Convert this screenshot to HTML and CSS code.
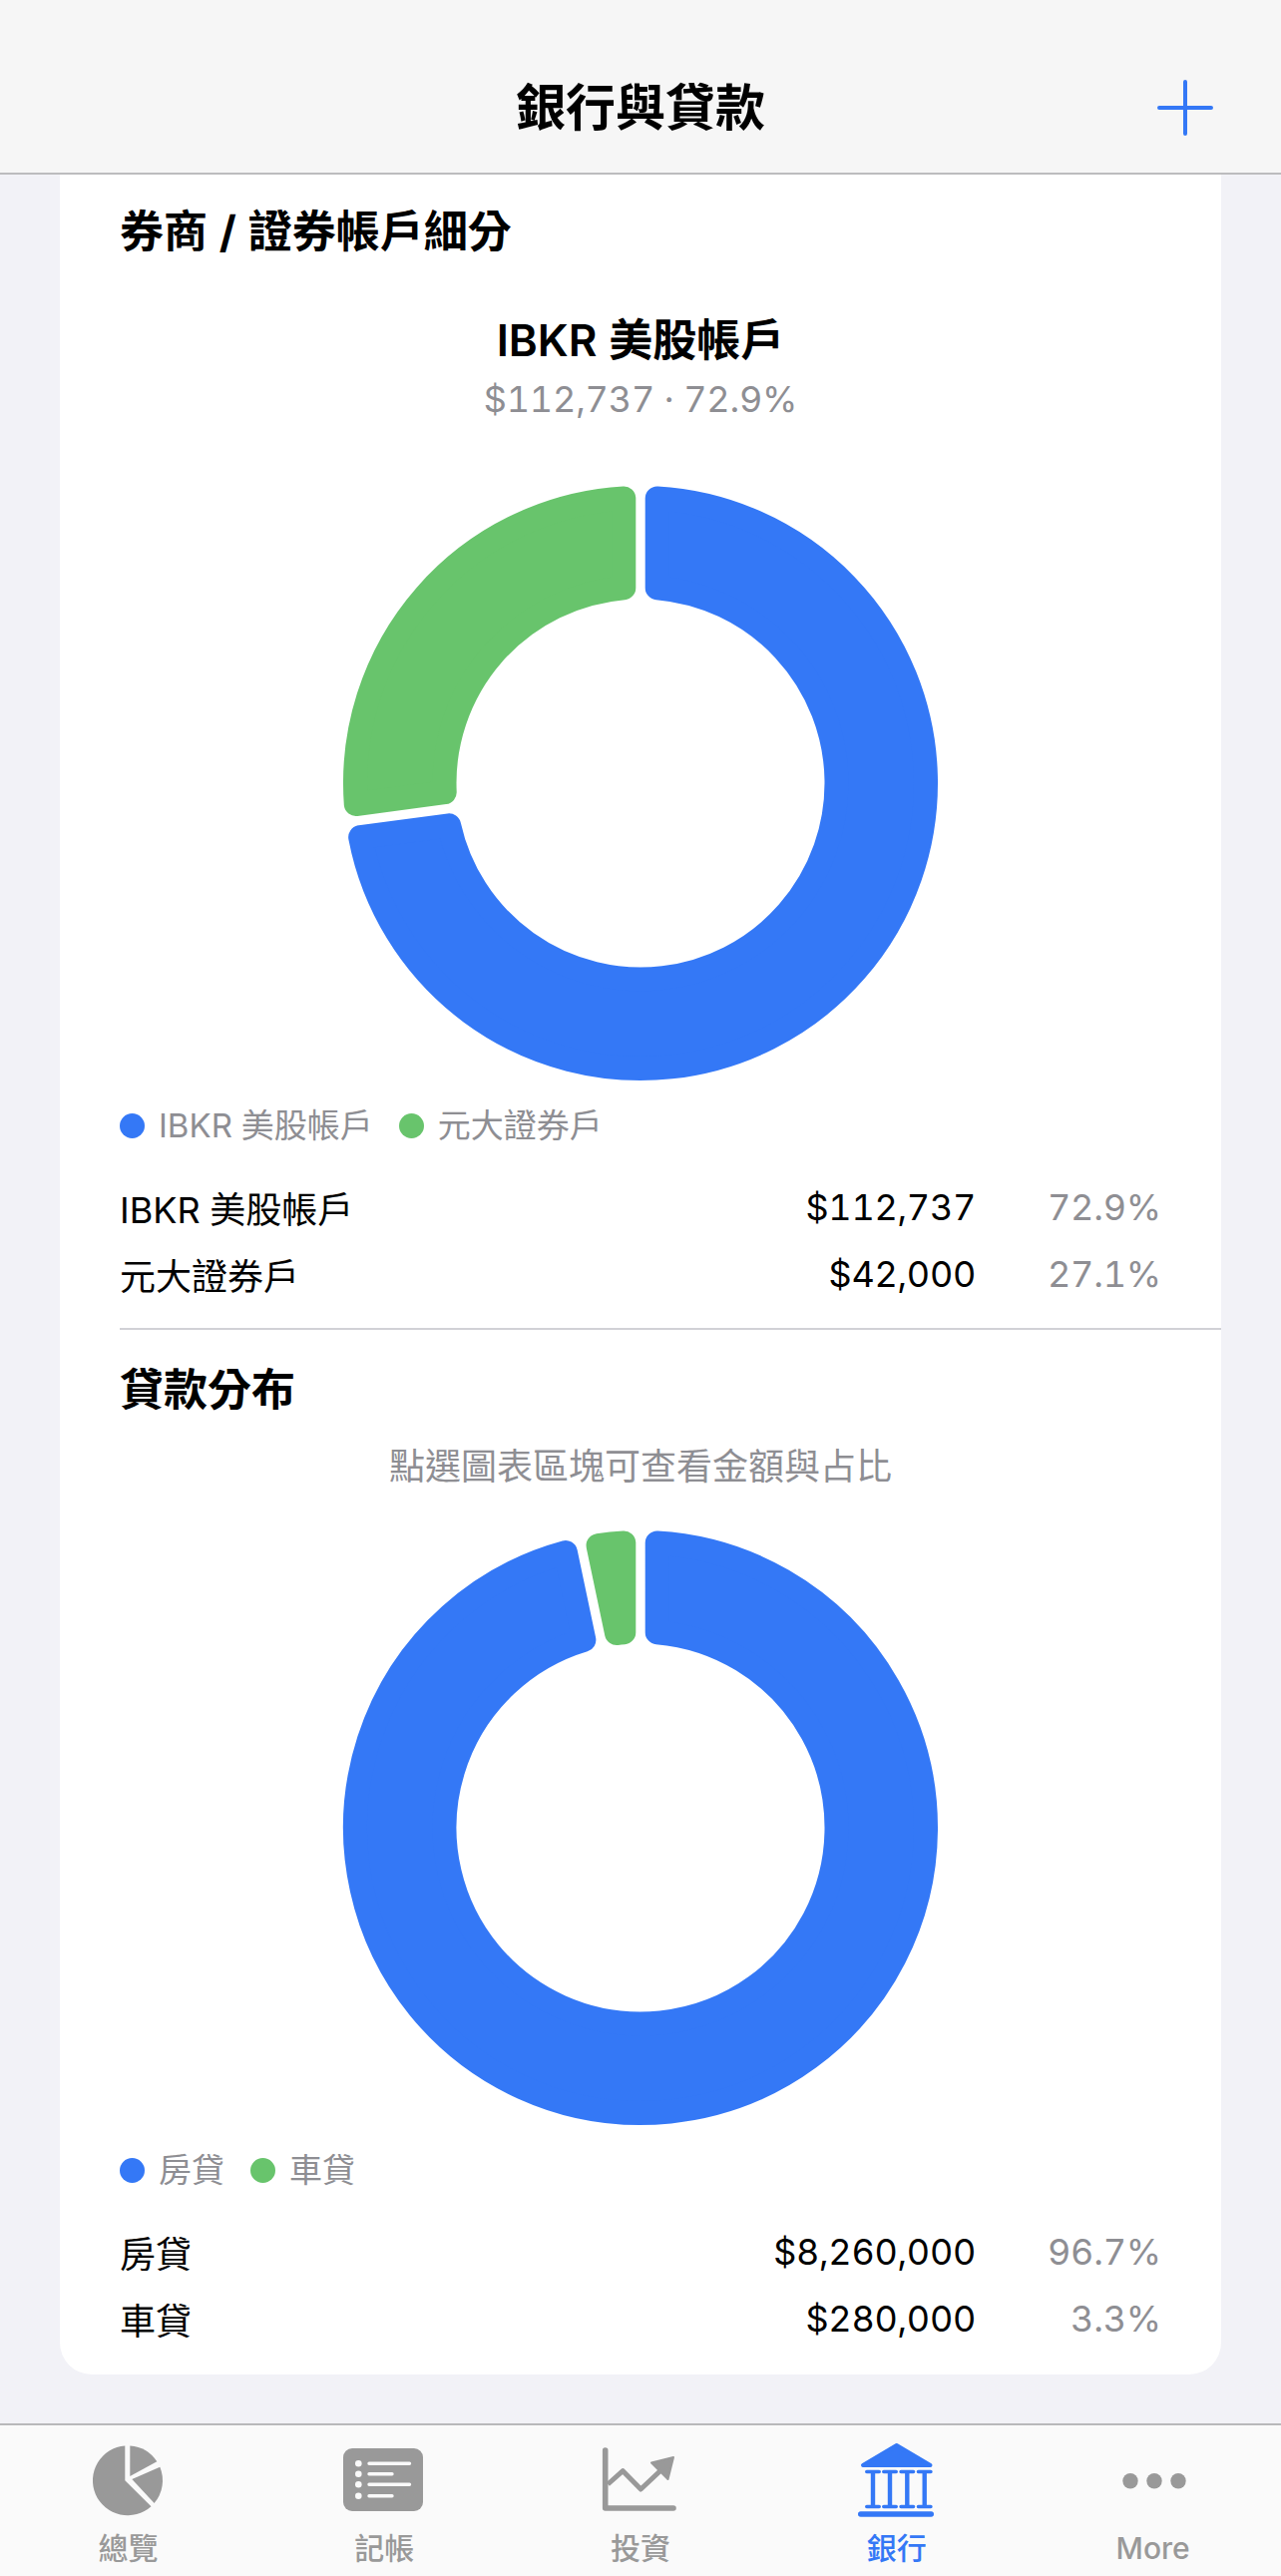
FILE: index.html
```html
<!DOCTYPE html>
<html lang="zh-Hant">
<head>
    <meta charset="UTF-8">
    <title>銀行與貸款</title>
    <link rel="stylesheet" href="styles.css">
</head>
<body>
    <div class="nav-bar">
        <h1 class="nav-title">銀行與貸款</h1>
        <svg class="nav-add" width="56" height="56" viewBox="0 0 56 56">
            <path d="M28 2V54M2 28H54" fill="none" stroke="#3478f6" stroke-width="4" stroke-linecap="round"/>
        </svg>
    </div>

    <div class="main">
        <div class="card">
            <div class="section">
                <h2 class="section-title">券商 / 證券帳戶細分</h2>
                <div class="focus-name">IBKR 美股帳戶</div>
                <div class="focus-value">$112,737 · 72.9%</div>
                <svg class="donut" viewBox="-300 -300 600 600">
                    <path class="slice-blue" d="M16.7 -285.51A286 286 0 1 1 -280.83 54.11L-191.89 42.32A196.5 196.5 0 1 0 16.7 -195.79Z"/>
                    <path class="slice-green" d="M-285.23 21.01A286 286 0 0 1 -16.7 -285.51L-16.7 -195.79A196.5 196.5 0 0 0 -196.28 9.2Z"/>
                </svg>
                <div class="legend">
                    <span class="legend-item"><i class="dot dot-blue"></i>IBKR 美股帳戶</span>
                    <span class="legend-item"><i class="dot dot-green"></i>元大證券戶</span>
                </div>
                <div class="rows">
                    <div class="row"><span class="row-name">IBKR 美股帳戶</span><span class="row-amount">$112,737</span><span class="row-pct">72.9%</span></div>
                    <div class="row"><span class="row-name">元大證券戶</span><span class="row-amount">$42,000</span><span class="row-pct">27.1%</span></div>
                </div>
            </div>

            <div class="section section-loans">
                <h2 class="section-title">貸款分布</h2>
                <div class="hint">點選圖表區塊可查看金額與占比</div>
                <svg class="donut" viewBox="-300 -300 600 600">
                    <path class="slice-blue" d="M16.7 -285.51A286 286 0 1 1 -75.11 -275.96L-56.64 -188.16A196.5 196.5 0 1 0 16.7 -195.79Z"/>
                    <path class="slice-green" d="M-42.44 -282.83A286 286 0 0 1 -16.7 -285.51L-16.7 -195.79A196.5 196.5 0 0 0 -23.97 -195.03Z"/>
                </svg>
                <div class="legend">
                    <span class="legend-item"><i class="dot dot-blue"></i>房貸</span>
                    <span class="legend-item"><i class="dot dot-green"></i>車貸</span>
                </div>
                <div class="rows">
                    <div class="row"><span class="row-name">房貸</span><span class="row-amount">$8,260,000</span><span class="row-pct">96.7%</span></div>
                    <div class="row"><span class="row-name">車貸</span><span class="row-amount">$280,000</span><span class="row-pct">3.3%</span></div>
                </div>
            </div>
        </div>
    </div>

    <div class="tab-bar">
        <div class="tab">
            <svg width="100" height="80" viewBox="0 0 100 80" fill="#999">
                <path d="M47.3 6.4A35 35 0 1 0 73.5 67.2L47.3 41.3Z"/>
                <path d="M52.3 6.4A35 35 0 0 1 79.3 22.2L52.3 37Z"/>
                <path d="M82.3 27.8A35 35 0 0 1 76.6 64L54.3 40Z"/>
            </svg>
            <span>總覽</span>
        </div>
        <div class="tab">
            <svg width="100" height="80" viewBox="0 0 100 80">
                <rect x="9" y="9" width="80" height="63" rx="9" fill="#999"/>
                <g fill="#fafafa">
                    <circle cx="24.3" cy="24.3" r="3.3"/>
                    <circle cx="24.3" cy="34.7" r="3.3"/>
                    <circle cx="24.3" cy="45.3" r="3.3"/>
                    <circle cx="24.3" cy="56.7" r="3.3"/>
                </g>
                <path d="M35 24.3H75.5M35 34.7H58M35 45.3H75.5M35 56.7H58" fill="none" stroke="#fafafa" stroke-width="3.4" stroke-linecap="round"/>
            </svg>
            <span>記帳</span>
        </div>
        <div class="tab">
            <svg width="100" height="80" viewBox="0 0 100 80">
                <path d="M14.7 11V69H83" fill="none" stroke="#999" stroke-width="5.6" stroke-linecap="round" stroke-linejoin="round"/>
                <path d="M17.3 45L32.3 31.7L50.3 50L69.7 31.7" fill="none" stroke="#999" stroke-width="5" stroke-linejoin="round"/>
                <path d="M61 23.5L83 18L77.5 40Z" fill="#999" stroke="#999" stroke-width="2" stroke-linejoin="round"/>
            </svg>
            <span>投資</span>
        </div>
        <div class="tab tab-active">
            <svg width="100" height="80" viewBox="0 0 100 80">
                <path d="M49.7 6L16 26H83.5Z" fill="#3478f6" stroke="#3478f6" stroke-width="4" stroke-linejoin="round"/>
                <path d="M26 33V67M43 33V67M60.3 33V67M77.7 33V67" stroke="#3478f6" stroke-width="4.4" fill="none"/>
                <path d="M19.8 32.5H32.2M36.8 32.5H49.2M54.1 32.5H66.5M71.5 32.5H83.9M19.8 67.5H32.2M36.8 67.5H49.2M54.1 67.5H66.5M71.5 67.5H83.9" stroke="#3478f6" stroke-width="3.6" stroke-linecap="round" fill="none"/>
                <path d="M13.7 75H84.3" stroke="#3478f6" stroke-width="5.4" stroke-linecap="round" fill="none"/>
            </svg>
            <span>銀行</span>
        </div>
        <div class="tab">
            <svg width="100" height="80" viewBox="0 0 100 80" fill="#999">
                <circle cx="27" cy="41.7" r="7.7"/>
                <circle cx="51" cy="41.7" r="7.7"/>
                <circle cx="75" cy="41.7" r="7.7"/>
            </svg>
            <span>More</span>
        </div>
    </div>
</body>
</html>
```

FILE: styles.css
```css
* {
    box-sizing: border-box;
}

body {
    font-family: Inter, "Noto Sans CJK TC", sans-serif;
    font-variant-numeric: tabular-nums;
    background-color: #f2f2f7;
    color: #000;
    display: flex;
    flex-direction: column;
    width: 1284px;
    height: 2582px;
    margin: 0;
    overflow: hidden;
}

.nav-bar {
    display: grid;
    grid-template-columns: 1fr auto 1fr;
    align-items: center;
    height: 175px;
    padding-top: 43px;
    background-color: #f6f6f6;
    border-bottom: 2px solid #bcbcbe;
}

.nav-title {
    grid-column: 2;
    margin: 0;
    font-size: 50px;
    font-weight: 700;
    line-height: 60px;
}

.nav-add {
    grid-column: 3;
    justify-self: end;
    margin-right: 68px;
}

.main {
    flex: 1;
    padding: 0 60px;
}

.card {
    height: 2205px;
    padding-left: 60px;
    background-color: #fff;
    border-radius: 0 0 32px 32px;
}

.section {
    display: flex;
    flex-direction: column;
    padding-right: 60px;
}

.section-loans {
    border-top: 2px solid #d1d1d6;
}

.section-title {
    margin: 27px 0 0;
    font-size: 44px;
    font-weight: 700;
    line-height: 60px;
}

.section-loans .section-title {
    margin-top: 30px;
}

.focus-name {
    margin-top: 51px;
    font-size: 44px;
    font-weight: 600;
    line-height: 56px;
    text-align: center;
}

.focus-value {
    margin-top: 7px;
    font-size: 36px;
    letter-spacing: -0.2px;
    line-height: 48px;
    color: #8e8e93;
    text-align: center;
}

.hint {
    margin-top: 23px;
    font-size: 36px;
    line-height: 48px;
    color: #8e8e93;
    text-align: center;
}

.donut {
    display: block;
    align-self: center;
    width: 600px;
    height: 600px;
    margin-top: 61px;
}

.section-loans .donut {
    margin-top: 38px;
}

.slice-blue,
.slice-green {
    stroke-width: 24;
    stroke-linejoin: round;
}

.slice-blue {
    fill: #3478f6;
    stroke: #3478f6;
}

.slice-green {
    fill: #68c46c;
    stroke: #68c46c;
}

.legend {
    display: flex;
    gap: 26px;
    margin-top: 23px;
    font-size: 33px;
    line-height: 40px;
    color: #8e8e93;
}

.legend-item {
    display: flex;
    align-items: center;
    gap: 14px;
}

.dot {
    width: 25px;
    height: 25px;
    border-radius: 50%;
}

.dot-blue {
    background-color: #3478f6;
}

.dot-green {
    background-color: #68c46c;
}

.rows {
    margin-top: 28px;
    margin-bottom: 21px;
}

.section-loans .rows {
    margin-bottom: 0;
}

.row {
    display: flex;
    align-items: center;
    height: 67px;
    font-size: 36px;
}

.row-name {
    flex: 1;
}

.row-amount {
    letter-spacing: -0.3px;
}

.row-pct {
    width: 186px;
    letter-spacing: -0.2px;
    color: #8e8e93;
    text-align: right;
}

.tab-bar {
    display: flex;
    height: 153px;
    padding-top: 14px;
    background-color: #fafafa;
    border-top: 2px solid #b8b8ba;
}

.tab {
    display: flex;
    flex: 1;
    flex-direction: column;
    align-items: center;
    gap: 11px;
    font-size: 30px;
    font-weight: 500;
    line-height: 36px;
    color: #999;
}

.tab-active {
    color: #3478f6;
}
```
